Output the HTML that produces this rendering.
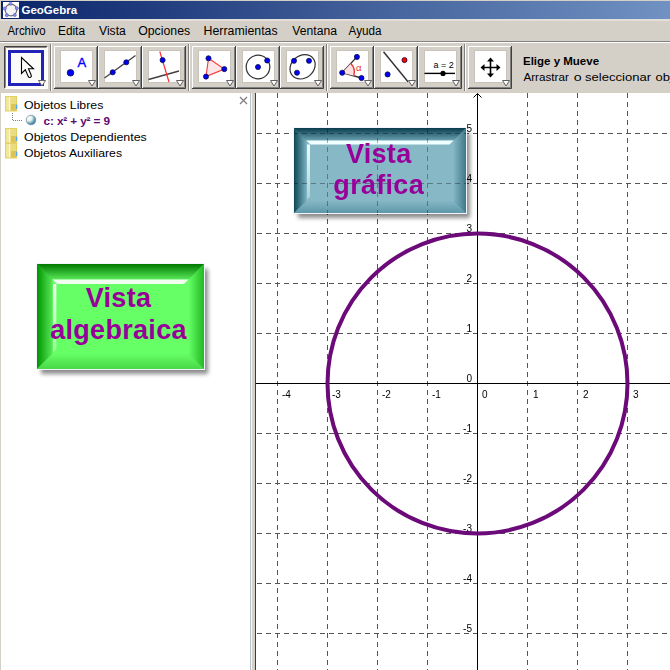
<!DOCTYPE html>
<html><head><meta charset="utf-8"><style>
html,body{margin:0;padding:0;width:670px;height:670px;overflow:hidden;background:#D4D0C8;}
svg{display:block;}
</style></head><body>
<svg width="670" height="670" viewBox="0 0 670 670"><rect width="670" height="670" fill="#D4D0C8"/><defs><linearGradient id="tg" x1="0" y1="0" x2="1015" y2="0" gradientUnits="userSpaceOnUse"><stop offset="0" stop-color="#0A246A"/><stop offset="1" stop-color="#A6CAF0"/></linearGradient><linearGradient id="gtop" x1="0" y1="0" x2="0" y2="1"><stop offset="0" stop-color="#008A00"/><stop offset="1" stop-color="#4CDC4C"/></linearGradient></defs><rect x="1" y="1" width="669" height="18" fill="url(#tg)"/><rect x="3" y="2" width="16" height="16" fill="#FFFFFF"/><circle cx="11" cy="10" r="5.8" fill="#F4F4F4" stroke="#6E6E6E" stroke-width="1.2"/><circle cx="10.5" cy="3.8" r="1.6" fill="#8C8CF0" stroke="#5050B0" stroke-width="0.5"/><circle cx="16.8" cy="8.2" r="1.6" fill="#8C8CF0" stroke="#5050B0" stroke-width="0.5"/><circle cx="14.8" cy="15" r="1.6" fill="#8C8CF0" stroke="#5050B0" stroke-width="0.5"/><circle cx="6.8" cy="15.2" r="1.6" fill="#8C8CF0" stroke="#5050B0" stroke-width="0.5"/><circle cx="4.8" cy="8.5" r="1.6" fill="#8C8CF0" stroke="#5050B0" stroke-width="0.5"/><text x="21.5" y="14" font-family='"Liberation Sans", sans-serif' font-weight="bold" font-size="11.5" fill="#FFFFFF">GeoGebra</text><text x="7.5" y="34.6" textLength="38" lengthAdjust="spacingAndGlyphs" font-family='"Liberation Sans", sans-serif' font-size="12" fill="#000000">Archivo</text><text x="58" y="34.6" textLength="27" lengthAdjust="spacingAndGlyphs" font-family='"Liberation Sans", sans-serif' font-size="12" fill="#000000">Edita</text><text x="99" y="34.6" textLength="26.8" lengthAdjust="spacingAndGlyphs" font-family='"Liberation Sans", sans-serif' font-size="12" fill="#000000">Vista</text><text x="138.2" y="34.6" textLength="52" lengthAdjust="spacingAndGlyphs" font-family='"Liberation Sans", sans-serif' font-size="12" fill="#000000">Opciones</text><text x="203.6" y="34.6" textLength="74" lengthAdjust="spacingAndGlyphs" font-family='"Liberation Sans", sans-serif' font-size="12" fill="#000000">Herramientas</text><text x="292.3" y="34.6" textLength="44.7" lengthAdjust="spacingAndGlyphs" font-family='"Liberation Sans", sans-serif' font-size="12" fill="#000000">Ventana</text><text x="348.6" y="34.6" textLength="33" lengthAdjust="spacingAndGlyphs" font-family='"Liberation Sans", sans-serif' font-size="12" fill="#000000">Ayuda</text><rect x="0" y="19" width="670" height="2" fill="#E2DFDA"/><rect x="0" y="41" width="670" height="1" fill="#808080"/><rect x="0" y="42" width="670" height="1" fill="#FFFFFF"/><rect x="50" y="44" width="1" height="47" fill="#808080"/><rect x="51" y="44" width="1" height="47" fill="#FFFFFF"/><rect x="188" y="44" width="1" height="47" fill="#808080"/><rect x="189" y="44" width="1" height="47" fill="#FFFFFF"/><rect x="326" y="44" width="1" height="47" fill="#808080"/><rect x="327" y="44" width="1" height="47" fill="#FFFFFF"/><rect x="464" y="44" width="1" height="47" fill="#808080"/><rect x="465" y="44" width="1" height="47" fill="#FFFFFF"/><rect x="4" y="46" width="44" height="43" fill="#D4D0C8"/><rect x="5" y="47" width="42" height="41" fill="#FBFBFA"/><path d="M4.5 88.5V46.5H47.5" fill="none" stroke="#404040"/><path d="M5.5 87.5V47.5H46.5" fill="none" stroke="#8A8884"/><path d="M47.5 46.5V88.5H4.5" fill="none" stroke="#FFFFFF"/><rect x="9.5" y="51.5" width="33" height="33" fill="none" stroke="#2222B8" stroke-width="3"/><path d="M38.5 80.5H45.5L42 86Z" fill="#FFFFFF" stroke="#606060" stroke-width="1" stroke-linejoin="round"/><rect x="54" y="46" width="44" height="43" fill="#D4D0C8"/><path d="M54.5 88V46.5H97" fill="none" stroke="#FFFFFF"/><path d="M97.5 46V88.5H54" fill="none" stroke="#404040"/><path d="M96.5 47V87.5H55" fill="none" stroke="#808080"/><rect x="60.5" y="50.5" width="32" height="32" fill="#FFFFFF" stroke="#C8C4BC" stroke-width="1"/><path d="M88.5 80.5H95.5L92 86Z" fill="#FFFFFF" stroke="#606060" stroke-width="1" stroke-linejoin="round"/><rect x="98" y="46" width="44" height="43" fill="#D4D0C8"/><path d="M98.5 88V46.5H141" fill="none" stroke="#FFFFFF"/><path d="M141.5 46V88.5H98" fill="none" stroke="#404040"/><path d="M140.5 47V87.5H99" fill="none" stroke="#808080"/><rect x="104.5" y="50.5" width="32" height="32" fill="#FFFFFF" stroke="#C8C4BC" stroke-width="1"/><path d="M132.5 80.5H139.5L136 86Z" fill="#FFFFFF" stroke="#606060" stroke-width="1" stroke-linejoin="round"/><rect x="142" y="46" width="44" height="43" fill="#D4D0C8"/><path d="M142.5 88V46.5H185" fill="none" stroke="#FFFFFF"/><path d="M185.5 46V88.5H142" fill="none" stroke="#404040"/><path d="M184.5 47V87.5H143" fill="none" stroke="#808080"/><rect x="148.5" y="50.5" width="32" height="32" fill="#FFFFFF" stroke="#C8C4BC" stroke-width="1"/><path d="M176.5 80.5H183.5L180 86Z" fill="#FFFFFF" stroke="#606060" stroke-width="1" stroke-linejoin="round"/><rect x="192" y="46" width="44" height="43" fill="#D4D0C8"/><path d="M192.5 88V46.5H235" fill="none" stroke="#FFFFFF"/><path d="M235.5 46V88.5H192" fill="none" stroke="#404040"/><path d="M234.5 47V87.5H193" fill="none" stroke="#808080"/><rect x="198.5" y="50.5" width="32" height="32" fill="#FFFFFF" stroke="#C8C4BC" stroke-width="1"/><path d="M226.5 80.5H233.5L230 86Z" fill="#FFFFFF" stroke="#606060" stroke-width="1" stroke-linejoin="round"/><rect x="236" y="46" width="44" height="43" fill="#D4D0C8"/><path d="M236.5 88V46.5H279" fill="none" stroke="#FFFFFF"/><path d="M279.5 46V88.5H236" fill="none" stroke="#404040"/><path d="M278.5 47V87.5H237" fill="none" stroke="#808080"/><rect x="242.5" y="50.5" width="32" height="32" fill="#FFFFFF" stroke="#C8C4BC" stroke-width="1"/><path d="M270.5 80.5H277.5L274 86Z" fill="#FFFFFF" stroke="#606060" stroke-width="1" stroke-linejoin="round"/><rect x="280" y="46" width="44" height="43" fill="#D4D0C8"/><path d="M280.5 88V46.5H323" fill="none" stroke="#FFFFFF"/><path d="M323.5 46V88.5H280" fill="none" stroke="#404040"/><path d="M322.5 47V87.5H281" fill="none" stroke="#808080"/><rect x="286.5" y="50.5" width="32" height="32" fill="#FFFFFF" stroke="#C8C4BC" stroke-width="1"/><path d="M314.5 80.5H321.5L318 86Z" fill="#FFFFFF" stroke="#606060" stroke-width="1" stroke-linejoin="round"/><rect x="330" y="46" width="44" height="43" fill="#D4D0C8"/><path d="M330.5 88V46.5H373" fill="none" stroke="#FFFFFF"/><path d="M373.5 46V88.5H330" fill="none" stroke="#404040"/><path d="M372.5 47V87.5H331" fill="none" stroke="#808080"/><rect x="336.5" y="50.5" width="32" height="32" fill="#FFFFFF" stroke="#C8C4BC" stroke-width="1"/><path d="M364.5 80.5H371.5L368 86Z" fill="#FFFFFF" stroke="#606060" stroke-width="1" stroke-linejoin="round"/><rect x="374" y="46" width="44" height="43" fill="#D4D0C8"/><path d="M374.5 88V46.5H417" fill="none" stroke="#FFFFFF"/><path d="M417.5 46V88.5H374" fill="none" stroke="#404040"/><path d="M416.5 47V87.5H375" fill="none" stroke="#808080"/><rect x="380.5" y="50.5" width="32" height="32" fill="#FFFFFF" stroke="#C8C4BC" stroke-width="1"/><path d="M408.5 80.5H415.5L412 86Z" fill="#FFFFFF" stroke="#606060" stroke-width="1" stroke-linejoin="round"/><rect x="418" y="46" width="44" height="43" fill="#D4D0C8"/><path d="M418.5 88V46.5H461" fill="none" stroke="#FFFFFF"/><path d="M461.5 46V88.5H418" fill="none" stroke="#404040"/><path d="M460.5 47V87.5H419" fill="none" stroke="#808080"/><rect x="424.5" y="50.5" width="32" height="32" fill="#FFFFFF" stroke="#C8C4BC" stroke-width="1"/><path d="M452.5 80.5H459.5L456 86Z" fill="#FFFFFF" stroke="#606060" stroke-width="1" stroke-linejoin="round"/><rect x="468" y="46" width="44" height="43" fill="#D4D0C8"/><path d="M468.5 88V46.5H511" fill="none" stroke="#FFFFFF"/><path d="M511.5 46V88.5H468" fill="none" stroke="#404040"/><path d="M510.5 47V87.5H469" fill="none" stroke="#808080"/><rect x="474.5" y="50.5" width="32" height="32" fill="#FFFFFF" stroke="#C8C4BC" stroke-width="1"/><path d="M502.5 80.5H509.5L506 86Z" fill="#FFFFFF" stroke="#606060" stroke-width="1" stroke-linejoin="round"/><path d="M21.5 57.5V73.5L25.3 69.8L28.3 76.6Q29 78 30.5 77.3Q31.8 76.6 31.2 75.2L28.5 68.8H33.5Z" fill="#FFFFFF" stroke="#000000" stroke-width="1.1" stroke-linejoin="miter"/><circle cx="70.5" cy="72.8" r="3.3" fill="#0000FF" stroke="#101040" stroke-width="0.8"/><text x="77.5" y="67" font-family='"Liberation Sans", sans-serif' font-size="13" fill="#0000FF" stroke="#0000FF" stroke-width="0.35">A</text><line x1="104.5" y1="78" x2="135.5" y2="55.5" stroke="#404040" stroke-width="1.3"/><circle cx="112.7" cy="72.3" r="2.55" fill="#0000FF" stroke="#101040" stroke-width="0.8"/><circle cx="126.3" cy="62.3" r="2.55" fill="#0000FF" stroke="#101040" stroke-width="0.8"/><line x1="148.5" y1="79.5" x2="179" y2="71" stroke="#404040" stroke-width="1.3"/><line x1="159.8" y1="51.5" x2="169" y2="82" stroke="#FF3030" stroke-width="1.2"/><circle cx="162.6" cy="60.1" r="2.55" fill="#0000FF" stroke="#101040" stroke-width="0.8"/><path d="M208.5 58.3L224.3 69.1L206 76.6Z" fill="#FFE6E6" stroke="#F03C3C" stroke-width="1.1"/><circle cx="208.5" cy="58.3" r="2.55" fill="#0000FF" stroke="#101040" stroke-width="0.8"/><circle cx="224.3" cy="69.1" r="2.55" fill="#0000FF" stroke="#101040" stroke-width="0.8"/><circle cx="206" cy="76.6" r="2.55" fill="#0000FF" stroke="#101040" stroke-width="0.8"/><circle cx="258" cy="67" r="11.8" fill="none" stroke="#303030" stroke-width="1.2"/><circle cx="258" cy="67" r="2.55" fill="#0000FF" stroke="#101040" stroke-width="0.8"/><circle cx="267.2" cy="60.5" r="2.55" fill="#0000FF" stroke="#101040" stroke-width="0.8"/><ellipse cx="302.6" cy="66.8" rx="13.5" ry="11.2" transform="rotate(-40 302.6 66.8)" fill="none" stroke="#303030" stroke-width="1.2"/><circle cx="294" cy="60.8" r="2.55" fill="#0000FF" stroke="#101040" stroke-width="0.8"/><circle cx="309" cy="60.8" r="2.55" fill="#0000FF" stroke="#101040" stroke-width="0.8"/><circle cx="297" cy="72.7" r="2.55" fill="#0000FF" stroke="#101040" stroke-width="0.8"/><path d="M356.9 56.9L342.2 72.7L361.5 78" fill="none" stroke="#303030" stroke-width="1.3"/><path d="M342.2 72.7L350.8 63.5A12.5 12.5 0 0 1 353.8 75.8Z" fill="#FFE0E0" stroke="none"/><path d="M350.8 63.5A12.5 12.5 0 0 1 353.8 75.8" fill="none" stroke="#E83030" stroke-width="1.3"/><text x="356" y="70.6" font-family='"Liberation Sans", sans-serif' font-size="9.5" fill="#F03030">α</text><circle cx="342.2" cy="72.7" r="2.55" fill="#0000FF" stroke="#101040" stroke-width="0.8"/><circle cx="356.9" cy="56.9" r="2.55" fill="#0000FF" stroke="#101040" stroke-width="0.8"/><circle cx="361.5" cy="78" r="2.55" fill="#0000FF" stroke="#101040" stroke-width="0.8"/><line x1="383.5" y1="51.8" x2="408" y2="81.8" stroke="#303030" stroke-width="1.4"/><circle cx="387.6" cy="74.4" r="2.55" fill="#0000FF" stroke="#101040" stroke-width="0.8"/><circle cx="404.5" cy="60.1" r="2.55" fill="#FF0000" stroke="#101040" stroke-width="0.8"/><text x="433.5" y="67.8" font-family='"Liberation Sans", sans-serif' font-size="9" fill="#000000">a = 2</text><line x1="424.5" y1="73.4" x2="455" y2="73.4" stroke="#000000" stroke-width="1.4"/><circle cx="443" cy="73.4" r="2.6" fill="#000000"/><path d="M490.5 60V75M483 67.5H498" stroke="#000000" stroke-width="1.6"/><path d="M490.5 57.5L487 61.5H494Z M490.5 77.5L487 73.5H494Z M480.5 67.5L484.5 64V71Z M500.5 67.5L496.5 64V71Z" fill="#000000"/><text x="523" y="65" font-family='"Liberation Sans", sans-serif' font-weight="bold" font-size="11.5" fill="#000000">Elige y Mueve</text><text x="523.4" y="80.5" textLength="45.4" lengthAdjust="spacingAndGlyphs" font-family='"Liberation Sans", sans-serif' font-size="11.5" fill="#000000">Arrastrar</text><text x="573.7" y="80.5" textLength="7.9" lengthAdjust="spacingAndGlyphs" font-family='"Liberation Sans", sans-serif' font-size="11.5" fill="#000000">o</text><text x="585" y="80.5" textLength="66" lengthAdjust="spacingAndGlyphs" font-family='"Liberation Sans", sans-serif' font-size="11.5" fill="#000000">seleccionar</text><text x="655.4" y="80.5" textLength="42" lengthAdjust="spacingAndGlyphs" font-family='"Liberation Sans", sans-serif' font-size="11.5" fill="#000000">objetos</text><rect x="1" y="93" width="249" height="577" fill="#FFFFFF"/><rect x="250" y="93" width="1" height="577" fill="#B8C2CC"/><rect x="251" y="93" width="1" height="577" fill="#F8F8F4"/><rect x="255" y="93" width="1" height="577" fill="#3C3C3C"/><path d="M240 97L247 104M247 97L240 104" stroke="#808080" stroke-width="1.3"/><rect x="5" y="96" width="12" height="15.5" fill="#E4D060"/><rect x="6" y="97" width="3" height="13.5" fill="#F2E69A"/><rect x="9" y="97" width="1.5" height="13.5" fill="#FFF8D0"/><rect x="10.5" y="97" width="5.5" height="13.5" fill="#EADC80"/><rect x="11" y="104" width="5" height="6.5" fill="#DCC458"/><rect x="16" y="104.5" width="1.3" height="4.5" fill="#58A8F0"/><text x="24" y="108.5" font-family='"Liberation Sans", sans-serif' font-size="11.5" fill="#000000" textLength="79.3" lengthAdjust="spacingAndGlyphs">Objetos Libres</text><path d="M12.5 113V120.5H22" fill="none" stroke="#808080" stroke-width="1" stroke-dasharray="1 1"/><defs><radialGradient id="sph" cx="0.3" cy="0.3" r="0.85"><stop offset="0" stop-color="#FFFFFF"/><stop offset="0.35" stop-color="#E4F0E8"/><stop offset="0.7" stop-color="#5A9AB8"/><stop offset="1" stop-color="#2C5C7C"/></radialGradient></defs><circle cx="31" cy="120" r="4.8" fill="url(#sph)" stroke="#6A8A98" stroke-width="0.7"/><text x="43.5" y="124.5" font-family='"Liberation Sans", sans-serif' font-weight="bold" font-size="11.8" textLength="66.5" lengthAdjust="spacing" fill="#5E0A72">c: x² + y² = 9</text><rect x="5" y="128" width="12" height="15.5" fill="#E4D060"/><rect x="6" y="129" width="3" height="13.5" fill="#F2E69A"/><rect x="9" y="129" width="1.5" height="13.5" fill="#FFF8D0"/><rect x="10.5" y="129" width="5.5" height="13.5" fill="#EADC80"/><rect x="11" y="136" width="5" height="6.5" fill="#DCC458"/><rect x="16" y="136.5" width="1.3" height="4.5" fill="#58A8F0"/><text x="24" y="140.5" font-family='"Liberation Sans", sans-serif' font-size="11.5" fill="#000000" textLength="122.8" lengthAdjust="spacingAndGlyphs">Objetos Dependientes</text><rect x="5" y="143" width="12" height="15.5" fill="#E4D060"/><rect x="6" y="144" width="3" height="13.5" fill="#F2E69A"/><rect x="9" y="144" width="1.5" height="13.5" fill="#FFF8D0"/><rect x="10.5" y="144" width="5.5" height="13.5" fill="#EADC80"/><rect x="11" y="151" width="5" height="6.5" fill="#DCC458"/><rect x="16" y="151.5" width="1.3" height="4.5" fill="#58A8F0"/><text x="24" y="156.5" font-family='"Liberation Sans", sans-serif' font-size="11.5" fill="#000000" textLength="98" lengthAdjust="spacingAndGlyphs">Objetos Auxiliares</text><defs><linearGradient id="gbt" x1="0" y1="264" x2="0" y2="279.5" gradientUnits="userSpaceOnUse"><stop offset="0" stop-color="#007800"/><stop offset="1" stop-color="#58E858"/></linearGradient><linearGradient id="gbl" x1="37" y1="0" x2="52.5" y2="0" gradientUnits="userSpaceOnUse"><stop offset="0" stop-color="#009400"/><stop offset="1" stop-color="#58E858"/></linearGradient><linearGradient id="gbr" x1="188.5" y1="0" x2="204" y2="0" gradientUnits="userSpaceOnUse"><stop offset="0" stop-color="#66FF66"/><stop offset="1" stop-color="#22B822"/></linearGradient><linearGradient id="gbb" x1="0" y1="353.5" x2="0" y2="369" gradientUnits="userSpaceOnUse"><stop offset="0" stop-color="#66FF66"/><stop offset="1" stop-color="#48D848"/></linearGradient><filter id="gbsh" x="-20%" y="-20%" width="140%" height="140%"><feGaussianBlur stdDeviation="2"/></filter></defs><rect x="41" y="269" width="167" height="105" fill="#000000" opacity="0.45" filter="url(#gbsh)"/><rect x="36" y="263" width="169" height="107" fill="#F4F4FF"/><rect x="37" y="264" width="167" height="105" fill="#3CC03C"/><rect x="52.0" y="279.0" width="137.0" height="75.0" fill="#66FF66"/><path d="M37 264H204L188.5 279.5H52.5Z" fill="url(#gbt)"/><path d="M37 264L52.5 279.5V353.5L37 369Z" fill="url(#gbl)"/><path d="M204 264V369L188.5 353.5V279.5Z" fill="url(#gbr)"/><path d="M37 369H204L188.5 353.5H52.5Z" fill="url(#gbb)"/><defs><linearGradient id="gbhl" x1="0" y1="279.5" x2="0" y2="353.5" gradientUnits="userSpaceOnUse"><stop offset="0" stop-color="#F0FFF0" stop-opacity="1"/><stop offset="1" stop-color="#F0FFF0" stop-opacity="0.35"/></linearGradient></defs><path d="M52.5 279.5H188.5L184.0 284.0H57.0Z" fill="#F0FFF0"/><path d="M53.0 284.0H56.375V349.0L53.0 352.375Z" fill="url(#gbhl)"/><text x="118.5" y="307" text-anchor="middle" font-family='"Liberation Sans", sans-serif' font-weight="bold" font-size="27" letter-spacing="0.3" fill="#990099">Vista</text><text x="118.5" y="338.6" text-anchor="middle" font-family='"Liberation Sans", sans-serif' font-weight="bold" font-size="27" letter-spacing="0.3" fill="#990099">algebraica</text><rect x="256" y="93" width="414" height="577" fill="#FFFFFF"/><g clip-path="url(#gclip)"><defs><clipPath id="gclip"><rect x="256" y="93" width="414" height="577"/></clipPath></defs><g id="grid"><line x1="277.5" y1="93" x2="277.5" y2="670" stroke="#555555" stroke-width="1" stroke-dasharray="5 4"/><line x1="327.5" y1="93" x2="327.5" y2="670" stroke="#555555" stroke-width="1" stroke-dasharray="5 4"/><line x1="377.5" y1="93" x2="377.5" y2="670" stroke="#555555" stroke-width="1" stroke-dasharray="5 4"/><line x1="427.5" y1="93" x2="427.5" y2="670" stroke="#555555" stroke-width="1" stroke-dasharray="5 4"/><line x1="527.5" y1="93" x2="527.5" y2="670" stroke="#555555" stroke-width="1" stroke-dasharray="5 4"/><line x1="577.5" y1="93" x2="577.5" y2="670" stroke="#555555" stroke-width="1" stroke-dasharray="5 4"/><line x1="627.5" y1="93" x2="627.5" y2="670" stroke="#555555" stroke-width="1" stroke-dasharray="5 4"/><line x1="257" y1="133.5" x2="670" y2="133.5" stroke="#555555" stroke-width="1" stroke-dasharray="5 4"/><line x1="257" y1="183.5" x2="670" y2="183.5" stroke="#555555" stroke-width="1" stroke-dasharray="5 4"/><line x1="257" y1="233.5" x2="670" y2="233.5" stroke="#555555" stroke-width="1" stroke-dasharray="5 4"/><line x1="257" y1="283.5" x2="670" y2="283.5" stroke="#555555" stroke-width="1" stroke-dasharray="5 4"/><line x1="257" y1="333.5" x2="670" y2="333.5" stroke="#555555" stroke-width="1" stroke-dasharray="5 4"/><line x1="257" y1="433.5" x2="670" y2="433.5" stroke="#555555" stroke-width="1" stroke-dasharray="5 4"/><line x1="257" y1="483.5" x2="670" y2="483.5" stroke="#555555" stroke-width="1" stroke-dasharray="5 4"/><line x1="257" y1="533.5" x2="670" y2="533.5" stroke="#555555" stroke-width="1" stroke-dasharray="5 4"/><line x1="257" y1="583.5" x2="670" y2="583.5" stroke="#555555" stroke-width="1" stroke-dasharray="5 4"/><line x1="257" y1="633.5" x2="670" y2="633.5" stroke="#555555" stroke-width="1" stroke-dasharray="5 4"/></g><defs><linearGradient id="tbt" x1="0" y1="128" x2="0" y2="140.5" gradientUnits="userSpaceOnUse"><stop offset="0" stop-color="#083C4C"/><stop offset="1" stop-color="#6AA2B2"/></linearGradient><linearGradient id="tbl" x1="294" y1="0" x2="306.5" y2="0" gradientUnits="userSpaceOnUse"><stop offset="0" stop-color="#0E4656"/><stop offset="1" stop-color="#78B0C0"/></linearGradient><linearGradient id="tbr" x1="453.5" y1="0" x2="466" y2="0" gradientUnits="userSpaceOnUse"><stop offset="0" stop-color="#84B6C4"/><stop offset="1" stop-color="#3E7888"/></linearGradient><linearGradient id="tbb" x1="0" y1="200.5" x2="0" y2="213" gradientUnits="userSpaceOnUse"><stop offset="0" stop-color="#86B8C6"/><stop offset="1" stop-color="#5E98A8"/></linearGradient><filter id="tbsh" x="-20%" y="-20%" width="140%" height="140%"><feGaussianBlur stdDeviation="2"/></filter></defs><rect x="298" y="133" width="172" height="85" fill="#000000" opacity="0.45" filter="url(#tbsh)"/><rect x="293" y="127" width="174" height="87" fill="#F4F4FF"/><rect x="294" y="128" width="172" height="85" fill="#40707E"/><rect x="306.0" y="140.0" width="148.0" height="61.0" fill="#86B8C6"/><path d="M294 128H466L453.5 140.5H306.5Z" fill="url(#tbt)"/><path d="M294 128L306.5 140.5V200.5L294 213Z" fill="url(#tbl)"/><path d="M466 128V213L453.5 200.5V140.5Z" fill="url(#tbr)"/><path d="M294 213H466L453.5 200.5H306.5Z" fill="url(#tbb)"/><defs><linearGradient id="tbhl" x1="0" y1="140.5" x2="0" y2="200.5" gradientUnits="userSpaceOnUse"><stop offset="0" stop-color="#F0FFFF" stop-opacity="1"/><stop offset="1" stop-color="#F0FFFF" stop-opacity="0.35"/></linearGradient></defs><path d="M306.5 140.5H453.5L449.5 144.5H310.5Z" fill="#F0FFFF"/><path d="M307.0 144.5H310.0V196.5L307.0 199.5Z" fill="url(#tbhl)"/><defs><clipPath id="tbclip"><rect x="294" y="128" width="172" height="85"/></clipPath></defs><g clip-path="url(#tbclip)" style="mix-blend-mode:multiply" opacity="0.5"><use href="#grid"/></g><line x1="256" y1="383.5" x2="670" y2="383.5" stroke="#000000" stroke-width="1"/><line x1="477.5" y1="93.5" x2="477.5" y2="670" stroke="#000000" stroke-width="1"/><path d="M473.5 97.5L477.5 93.5L481.5 97.5" fill="none" stroke="#000000" stroke-width="1"/><text x="282" y="398" font-family='"Liberation Sans", sans-serif' font-size="10" fill="#000000">-4</text><text x="332" y="398" font-family='"Liberation Sans", sans-serif' font-size="10" fill="#000000">-3</text><text x="382" y="398" font-family='"Liberation Sans", sans-serif' font-size="10" fill="#000000">-2</text><text x="432" y="398" font-family='"Liberation Sans", sans-serif' font-size="10" fill="#000000">-1</text><text x="482" y="398" font-family='"Liberation Sans", sans-serif' font-size="10" fill="#000000">0</text><text x="533" y="398" font-family='"Liberation Sans", sans-serif' font-size="10" fill="#000000">1</text><text x="583" y="398" font-family='"Liberation Sans", sans-serif' font-size="10" fill="#000000">2</text><text x="633" y="398" font-family='"Liberation Sans", sans-serif' font-size="10" fill="#000000">3</text><text x="472" y="132" text-anchor="end" font-family='"Liberation Sans", sans-serif' font-size="10" fill="#000000">5</text><text x="472" y="182" text-anchor="end" font-family='"Liberation Sans", sans-serif' font-size="10" fill="#000000">4</text><text x="472" y="232" text-anchor="end" font-family='"Liberation Sans", sans-serif' font-size="10" fill="#000000">3</text><text x="472" y="282" text-anchor="end" font-family='"Liberation Sans", sans-serif' font-size="10" fill="#000000">2</text><text x="472" y="332" text-anchor="end" font-family='"Liberation Sans", sans-serif' font-size="10" fill="#000000">1</text><text x="472" y="382" text-anchor="end" font-family='"Liberation Sans", sans-serif' font-size="10" fill="#000000">0</text><text x="472" y="432" text-anchor="end" font-family='"Liberation Sans", sans-serif' font-size="10" fill="#000000">-1</text><text x="472" y="482" text-anchor="end" font-family='"Liberation Sans", sans-serif' font-size="10" fill="#000000">-2</text><text x="472" y="532" text-anchor="end" font-family='"Liberation Sans", sans-serif' font-size="10" fill="#000000">-3</text><text x="472" y="582" text-anchor="end" font-family='"Liberation Sans", sans-serif' font-size="10" fill="#000000">-4</text><text x="472" y="632" text-anchor="end" font-family='"Liberation Sans", sans-serif' font-size="10" fill="#000000">-5</text><text x="378.7" y="162.8" text-anchor="middle" font-family='"Liberation Sans", sans-serif' font-weight="bold" font-size="27" letter-spacing="0.3" fill="#990099">Vista</text><text x="378.7" y="194.1" text-anchor="middle" font-family='"Liberation Sans", sans-serif' font-weight="bold" font-size="27" letter-spacing="0.3" fill="#990099">gráfica</text><circle cx="477.5" cy="383.5" r="150" fill="none" stroke="#6B0A78" stroke-width="4"/></g></svg>
</body></html>
